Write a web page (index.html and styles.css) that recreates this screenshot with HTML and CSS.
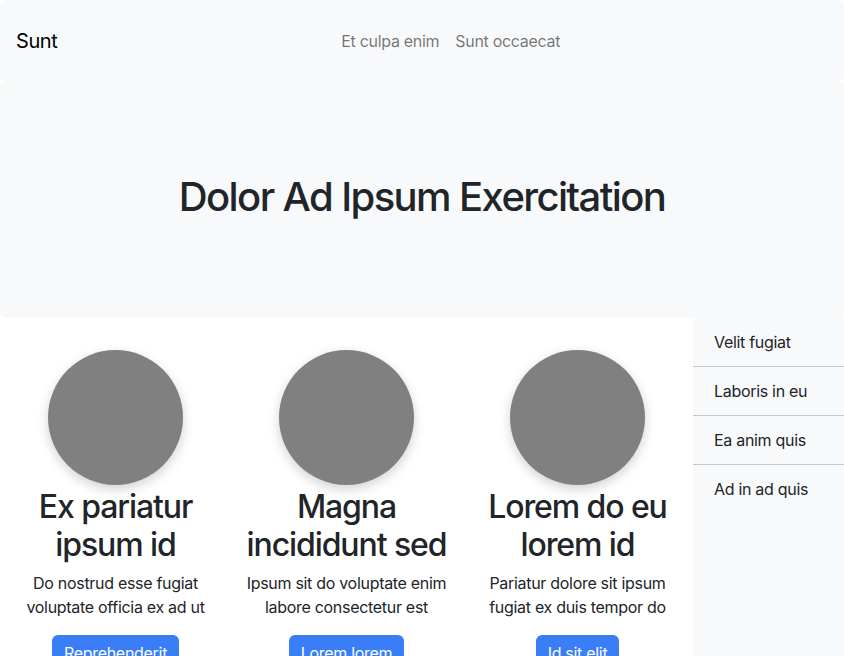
FILE: index.html
```html
<!DOCTYPE html>
<html>
<head>
<meta charset="utf-8">
<link rel="stylesheet" href="styles.css">
</head>
<body>
<nav class="navbar">
  <a class="brand">Sunt</a>
  <div class="nav-links">
    <a class="nav-link">Et culpa enim</a>
    <a class="nav-link">Sunt occaecat</a>
  </div>
</nav>
<header class="hero">
  <h1 class="hero-title">Dolor Ad Ipsum Exercitation</h1>
</header>
<div class="main">
  <section class="cards">
    <div class="card">
      <div class="circle"></div>
      <h2 class="card-title">Ex pariatur ipsum id</h2>
      <p class="card-text">Do nostrud esse fugiat voluptate officia ex ad ut</p>
      <a class="btn">Reprehenderit</a>
    </div>
    <div class="card">
      <div class="circle"></div>
      <h2 class="card-title">Magna incididunt sed</h2>
      <p class="card-text">Ipsum sit do voluptate enim labore consectetur est</p>
      <a class="btn">Lorem lorem</a>
    </div>
    <div class="card">
      <div class="circle"></div>
      <h2 class="card-title">Lorem do eu lorem id</h2>
      <p class="card-text">Pariatur dolore sit ipsum fugiat ex duis tempor do</p>
      <a class="btn">Id sit elit</a>
    </div>
  </section>
  <aside class="sidebar">
    <div class="side-item">Velit fugiat</div>
    <div class="side-item">Laboris in eu</div>
    <div class="side-item">Ea anim quis</div>
    <div class="side-item">Ad in ad quis</div>
  </aside>
</div>
</body>
</html>
```
FILE: styles.css
```css
* { box-sizing: border-box; }
html, body { margin: 0; padding: 0; }
body {
  font-family: Inter, "Liberation Sans", sans-serif;
  color: #212529;
  background: #fff;
  font-size: 16px;
  line-height: 24px;
  letter-spacing: -0.3px;
  overflow: hidden;
  height: 656px;
}
.navbar {
  display: flex;
  align-items: center;
  height: 81px;
  padding: 0 16px;
  background: #f8f9fa;
  border-radius: 6px;
}
.brand {
  font-size: 20px;
  line-height: 30px;
  color: #000;
  margin-right: 16px;
  letter-spacing: -0.4px;
}
.nav-links {
  flex: 1;
  display: flex;
  justify-content: center;
  gap: 16px;
}
.nav-link {
  color: rgba(0,0,0,0.55);
  font-size: 16px;
}
.hero {
  height: 237px;
  padding-bottom: 5px;
  background: #f8f9fa;
  border-radius: 6px;
  display: flex;
  align-items: center;
  justify-content: center;
}
.hero-title {
  margin: 0;
  font-size: 40px;
  font-weight: 500;
  line-height: 48px;
  letter-spacing: -1.6px;
}
.main {
  display: flex;
  height: 338px;
}
.cards {
  width: 693px;
  display: grid;
  grid-template-columns: repeat(3, 1fr);
  padding-top: 32px;
}
.card {
  padding: 0 12px;
  display: flex;
  flex-direction: column;
  align-items: center;
  text-align: center;
}
.circle {
  width: 135px;
  height: 135px;
  border-radius: 50%;
  background: #808080;
  box-shadow: 0 4px 12px rgba(0,0,0,0.18);
  margin-bottom: 3px;
}
.card-title {
  margin: 0 0 7px;
  font-size: 32px;
  font-weight: 500;
  line-height: 38px;
  letter-spacing: -1.1px;
}
.card-text {
  margin: 0 0 16px;
  font-size: 16px;
  line-height: 24px;
}
.btn {
  display: inline-block;
  background: #3a7ef7;
  color: #fff;
  padding: 6px 12px;
  border-radius: 6px;
  line-height: 24px;
}
.sidebar {
  flex: 1;
  background: #f8f9fa;
  border-top-left-radius: 4px;
}
.side-item {
  padding: 12px 20px 12px 21px;
  line-height: 24px;
  border-bottom: 1px solid #c6c7c8;
}
.side-item:last-child { border-bottom: none; }
```
